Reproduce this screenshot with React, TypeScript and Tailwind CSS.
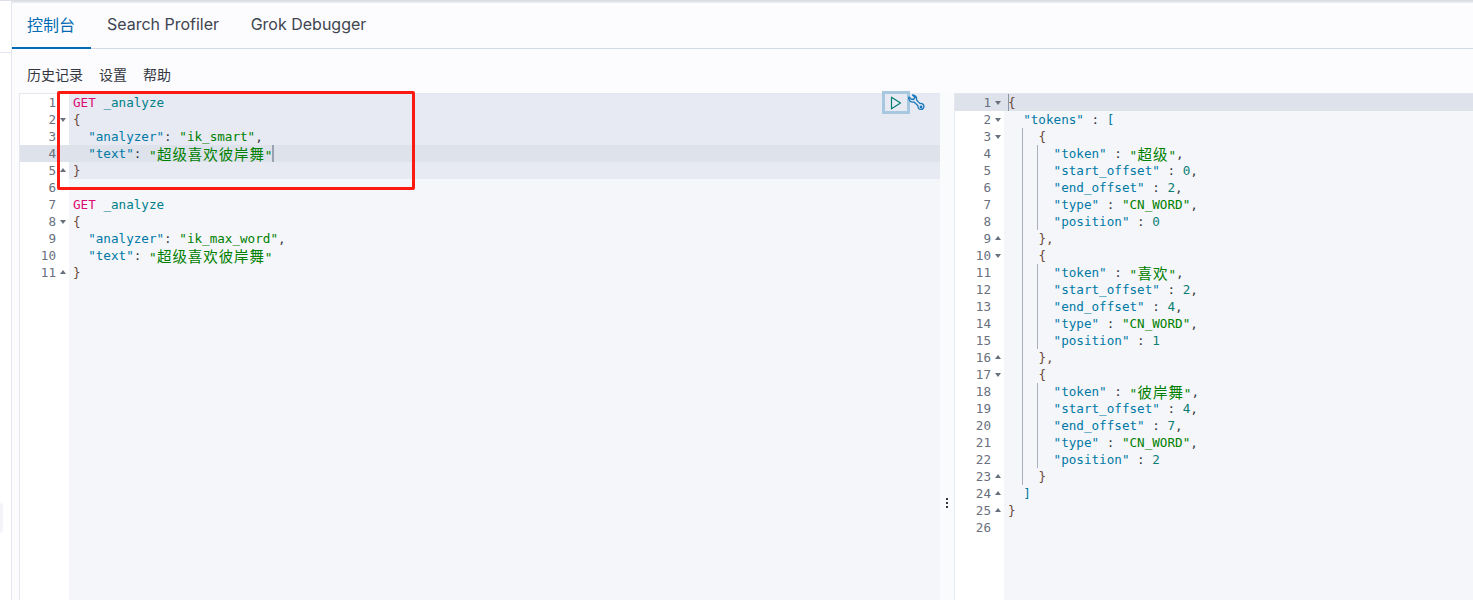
import React from 'react';

const CODE_FONT = 'font-["DejaVu_Sans_Mono","Noto_Sans_CJK_SC",monospace]';

type Fold = 'down' | 'up' | undefined;
type Tok = [string, string];

const C = {
  method: 'text-[#dd0a73]',
  url: 'text-[#00808a]',
  key: 'text-[#0079a5]',
  str: 'text-[#008000]',
  num: 'text-[#0a7d73]',
  punc: 'text-[#343741]',
  brace: 'text-[#6b4a3a]',
};

const cjk = /[\u4e00-\u9fff]+/;

function TokenText({ tok }: { tok: Tok }) {
  const [text, cls] = tok;
  const m = text.match(cjk);
  if (!m) return <span className={cls}>{text}</span>;
  const i = text.indexOf(m[0]);
  return (
    <span className={cls}>
      {text.slice(0, i)}
      <span className="ml-[0.5px] text-[14.5px] tracking-[0.9px] leading-[17px] font-['Noto_Sans_CJK_SC',sans-serif]">{m[0]}</span>
      {text.slice(i + m[0].length)}
    </span>
  );
}

function Row({ n, fold, toks, indent = 0, guides = false, bg = '', gutterBg = '', cursor = false, cursorStart = false }: {
  n: number; fold?: Fold; toks: Tok[]; indent?: number; guides?: boolean; bg?: string; gutterBg?: string; cursor?: boolean; cursorStart?: boolean;
}) {
  const cells = Math.floor(indent / 2);
  return (
    <div className="flex h-[17px] leading-[17px]">
      <div className={`relative w-[49px] shrink-0 pr-[13px] text-right text-[#69707d] ${gutterBg}`}>
        {n}
        {fold === 'down' && <span className="absolute right-[3px] top-[7px] border-x-[3px] border-t-[4px] border-x-transparent border-t-[#69707d]" />}
        {fold === 'up' && <span className="absolute right-[3px] top-[6px] border-x-[3px] border-b-[4px] border-x-transparent border-b-[#69707d]" />}
      </div>
      <div className={`relative flex min-w-0 flex-1 whitespace-pre pl-[4px] ${bg}`}>
        {cursorStart && <span className="absolute left-[4px] top-0 h-[17px] w-[1px] bg-[#8b93a3]" />}
        {Array.from({ length: cells }).map((_, i) => (
          <span key={i} className={`h-[17px] w-[15.2px] ${guides && i < cells - 1 ? 'border-r border-[#a9afbf]' : ''}`} />
        ))}
        {toks.map((t, i) => <TokenText key={i} tok={t} />)}
        {cursor && <span className="h-[17px] w-[2px] bg-[#98a2b3]" />}
      </div>
    </div>
  );
}

const S = (s: string): Tok => [s, C.str];
const K = (s: string): Tok => [s, C.key];
const P = (s: string): Tok => [s, C.punc];
const N = (s: string): Tok => [s, C.num];
const B = (s: string): Tok => [s, C.brace];

const hl = 'bg-[#e7eaf2]';
const active = 'bg-[#dde2eb]';

const leftLines = [
  { fold: undefined, toks: [['GET', C.method], [' ', C.punc], ['_analyze', C.url]] as Tok[], bg: hl },
  { fold: 'down', toks: [B('{')], bg: hl },
  { fold: undefined, indent: 2, toks: [K('"analyzer"'), P(': '), S('"ik_smart"'), P(',')], bg: hl },
  { fold: undefined, indent: 2, toks: [K('"text"'), P(': '), S('"超级喜欢彼岸舞"')], bg: active, gutterBg: active, cursor: true },
  { fold: 'up', toks: [B('}')], bg: hl },
  { fold: undefined, toks: [] as Tok[] },
  { fold: undefined, toks: [['GET', C.method], [' ', C.punc], ['_analyze', C.url]] as Tok[] },
  { fold: 'down', toks: [B('{')] },
  { fold: undefined, indent: 2, toks: [K('"analyzer"'), P(': '), S('"ik_max_word"'), P(',')] },
  { fold: undefined, indent: 2, toks: [K('"text"'), P(': '), S('"超级喜欢彼岸舞"')] },
  { fold: 'up', toks: [B('}')] },
];

function tokenBlock(word: string, start: number, end: number, pos: number) {
  return [
    { indent: 6, toks: [K('"token"'), P(' : '), S(`"${word}"`), P(',')] },
    { indent: 6, toks: [K('"start_offset"'), P(' : '), N(String(start)), P(',')] },
    { indent: 6, toks: [K('"end_offset"'), P(' : '), N(String(end)), P(',')] },
    { indent: 6, toks: [K('"type"'), P(' : '), S('"CN_WORD"'), P(',')] },
    { indent: 6, toks: [K('"position"'), P(' : '), N(String(pos))] },
  ];
}

const rightLines: { fold?: Fold; indent?: number; toks: Tok[]; bg?: string; gutterBg?: string; cursorStart?: boolean }[] = [
  { fold: 'down', toks: [B('{')], bg: active, gutterBg: active, cursorStart: true },
  { fold: 'down', indent: 2, toks: [K('"tokens"'), P(' : '), K('[')] },
  { fold: 'down', indent: 4, toks: [B('{')] },
  ...tokenBlock('超级', 0, 2, 0),
  { fold: 'up', indent: 4, toks: [B('},')] },
  { fold: 'down', indent: 4, toks: [B('{')] },
  ...tokenBlock('喜欢', 2, 4, 1),
  { fold: 'up', indent: 4, toks: [B('},')] },
  { fold: 'down', indent: 4, toks: [B('{')] },
  ...tokenBlock('彼岸舞', 4, 7, 2),
  { fold: 'up', indent: 4, toks: [B('}')] },
  { fold: 'up', indent: 2, toks: [K(']')] },
  { fold: 'up', toks: [B('}')] },
  { toks: [] },
];

export default function App() {
  return (
    <div className="relative flex h-[600px] w-[1473px] overflow-hidden bg-white font-['Inter',sans-serif]">
      {/* collapsed nav */}
      <div className="relative w-[12px] shrink-0 border-r border-[#e4e7ee] bg-white">
        <div className="h-px bg-[#dcdfe6]" />
        <div className="mt-[51px] h-px bg-[#e4e7ee]" />
        <div className="absolute left-0 top-[503px] h-[30px] w-[3px] rounded-r bg-[#f3f4fa]" />
      </div>

      <div className="flex min-w-0 flex-1 flex-col bg-[#fcfcfe]">
        <div className="h-[3px] bg-gradient-to-b from-[#d6d9e0] to-[#eef0f4]" />
        {/* tabs */}
        <div className="flex h-[46px] border-b border-[#d3dae6] pb-[3px] text-[16px] text-[#404550]">
          <div className="-mb-[4px] flex w-[79px] items-center justify-center border-b-2 border-[#006bb4] pb-[2px] pr-[1px] text-[#006bb4] font-['Noto_Sans_CJK_SC',sans-serif]">控制台</div>
          <div className="flex w-[144px] items-center justify-center">Search Profiler</div>
          <div className="flex w-[147px] items-center justify-center">Grok Debugger</div>
        </div>
        {/* menu */}
        <div className="flex h-[44px] items-center gap-[16px] pl-[15px] pt-[7px] text-[14px] text-[#343741] font-['Noto_Sans_CJK_SC',sans-serif]">
          <span>历史记录</span>
          <span>设置</span>
          <span>帮助</span>
        </div>
        {/* panes */}
        <div className={`relative flex min-h-0 flex-1 pl-[7px] text-[12.62px] ${CODE_FONT}`}>
          <div className="flex w-[921px] shrink-0 flex-col border-l border-t border-[#e4e7ee] bg-[linear-gradient(to_right,white_49px,#f5f6fa_49px)]">
            {leftLines.map((l, i) => (
              <Row key={i} n={i + 1} fold={l.fold as Fold} toks={l.toks} indent={l.indent} bg={l.bg} gutterBg={l.gutterBg} cursor={l.cursor} />
            ))}
          </div>
          <div className="flex w-[15px] shrink-0 items-center justify-center border-r border-[#e4e7ee] bg-[#fafbfd] pt-[312px]">
            <div className="flex flex-col gap-[2px]">
              <span className="h-[2px] w-[2px] bg-[#343741]" />
              <span className="h-[2px] w-[2px] bg-[#343741]" />
              <span className="h-[2px] w-[2px] bg-[#343741]" />
            </div>
          </div>
          <div className="flex min-w-0 flex-1 flex-col border-t border-[#e4e7ee] bg-[linear-gradient(to_right,white_49px,#f5f6fa_49px)]">
            {rightLines.map((l, i) => (
              <Row key={i} n={i + 1} fold={l.fold} toks={l.toks} indent={l.indent} guides bg={l.bg} gutterBg={l.gutterBg} cursorStart={l.cursorStart} />
            ))}
          </div>
        </div>
      </div>

      {/* action buttons */}
      <div className="absolute left-[882px] top-[91px] flex items-center">
        <div className="flex h-[23px] w-[28px] items-center justify-center border-[3px] border-[#a8c8e0]">
          <svg width="12" height="14" viewBox="0 0 12 14" fill="none" stroke="#017d73" strokeWidth="1.2"><path d="M1.5 1.2 L10.5 7 L1.5 12.8 Z" strokeLinejoin="round" /></svg>
        </div>
        <svg className="-ml-[2px]" width="17" height="17" viewBox="0 0 17 17" fill="none" stroke="#1a78bd" strokeWidth="1.3" strokeLinejoin="round">
          <path d="M4.5 1 L7 3.5 L5.5 5.5 L3 5 L1 3 A4 4 0 0 0 6 8 L10 11.8 A3 3 0 1 0 12 9.6 L8.5 6 A4 4 0 0 0 4.5 1 Z" />
          <circle cx="13" cy="13" r="0.8" />
        </svg>
      </div>

      {/* red annotation */}
      <div className="absolute left-[57px] top-[91px] h-[99px] w-[358px] rounded-[2px] border-[3px] border-[#fb1a12]" />
    </div>
  );
}
